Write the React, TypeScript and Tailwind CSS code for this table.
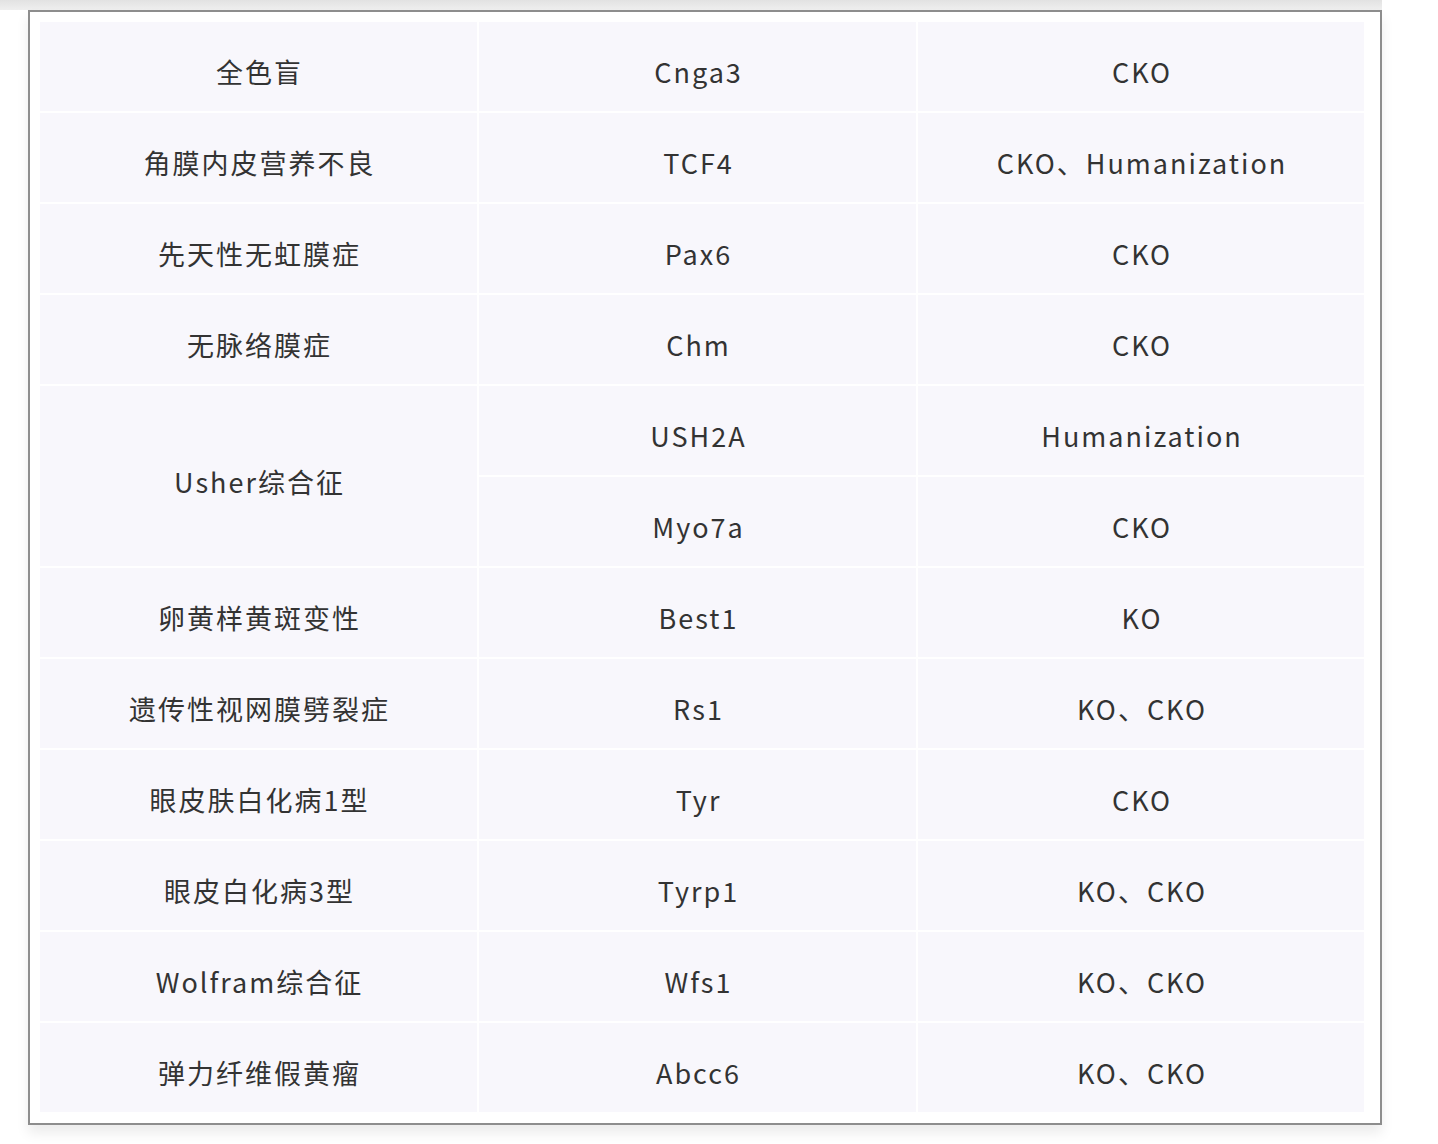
const rows: { disease: string; genes: { gene: string; type: string }[] }[] = [
  { disease: "全色盲", genes: [{ gene: "Cnga3", type: "CKO" }] },
  { disease: "角膜内皮营养不良", genes: [{ gene: "TCF4", type: "CKO、Humanization" }] },
  { disease: "先天性无虹膜症", genes: [{ gene: "Pax6", type: "CKO" }] },
  { disease: "无脉络膜症", genes: [{ gene: "Chm", type: "CKO" }] },
  {
    disease: "Usher综合征",
    genes: [
      { gene: "USH2A", type: "Humanization" },
      { gene: "Myo7a", type: "CKO" },
    ],
  },
  { disease: "卵黄样黄斑变性", genes: [{ gene: "Best1", type: "KO" }] },
  { disease: "遗传性视网膜劈裂症", genes: [{ gene: "Rs1", type: "KO、CKO" }] },
  { disease: "眼皮肤白化病1型", genes: [{ gene: "Tyr", type: "CKO" }] },
  { disease: "眼皮白化病3型", genes: [{ gene: "Tyrp1", type: "KO、CKO" }] },
  { disease: "Wolfram综合征", genes: [{ gene: "Wfs1", type: "KO、CKO" }] },
  { disease: "弹力纤维假黄瘤", genes: [{ gene: "Abcc6", type: "KO、CKO" }] },
];

function Cell({ children, span }: { children: React.ReactNode; span?: boolean }) {
  return (
    <div
      className={
        "flex items-center justify-center bg-[#f8f7fc] pl-[2px] pt-[12px] " +
        (span ? "row-span-2" : "")
      }
    >
      {children}
    </div>
  );
}

export default function App() {
  return (
    <div className="relative h-[1144px] w-[1438px] overflow-hidden bg-white font-['Noto_Sans_CJK_SC','Noto_Sans',sans-serif] text-[27px] tracking-[2px] text-[#333]">
      {/* grey band above the frame */}
      <div className="h-[10px] w-[1382px] bg-gradient-to-b from-[#e2e2e2] to-[#efefef]" />

      <div className="ml-[28px] w-[1354px] border-2 border-[#8d8d8d] bg-white pb-[11px] pl-[10px] pt-[10px] shadow-[0_8px_12px_rgba(0,0,0,0.08)]">
        <div className="grid w-[1324px] grid-cols-[437px_437px_446px] auto-rows-[89px] gap-[2px] bg-white">
          {rows.map((r) =>
            r.genes.length > 1 ? (
              <div key={r.disease} className="contents">
                <Cell span>{r.disease}</Cell>
                <Cell>{r.genes[0].gene}</Cell>
                <Cell>{r.genes[0].type}</Cell>
                <Cell>{r.genes[1].gene}</Cell>
                <Cell>{r.genes[1].type}</Cell>
              </div>
            ) : (
              <div key={r.disease} className="contents">
                <Cell>{r.disease}</Cell>
                <Cell>{r.genes[0].gene}</Cell>
                <Cell>{r.genes[0].type}</Cell>
              </div>
            )
          )}
        </div>
      </div>
    </div>
  );
}
